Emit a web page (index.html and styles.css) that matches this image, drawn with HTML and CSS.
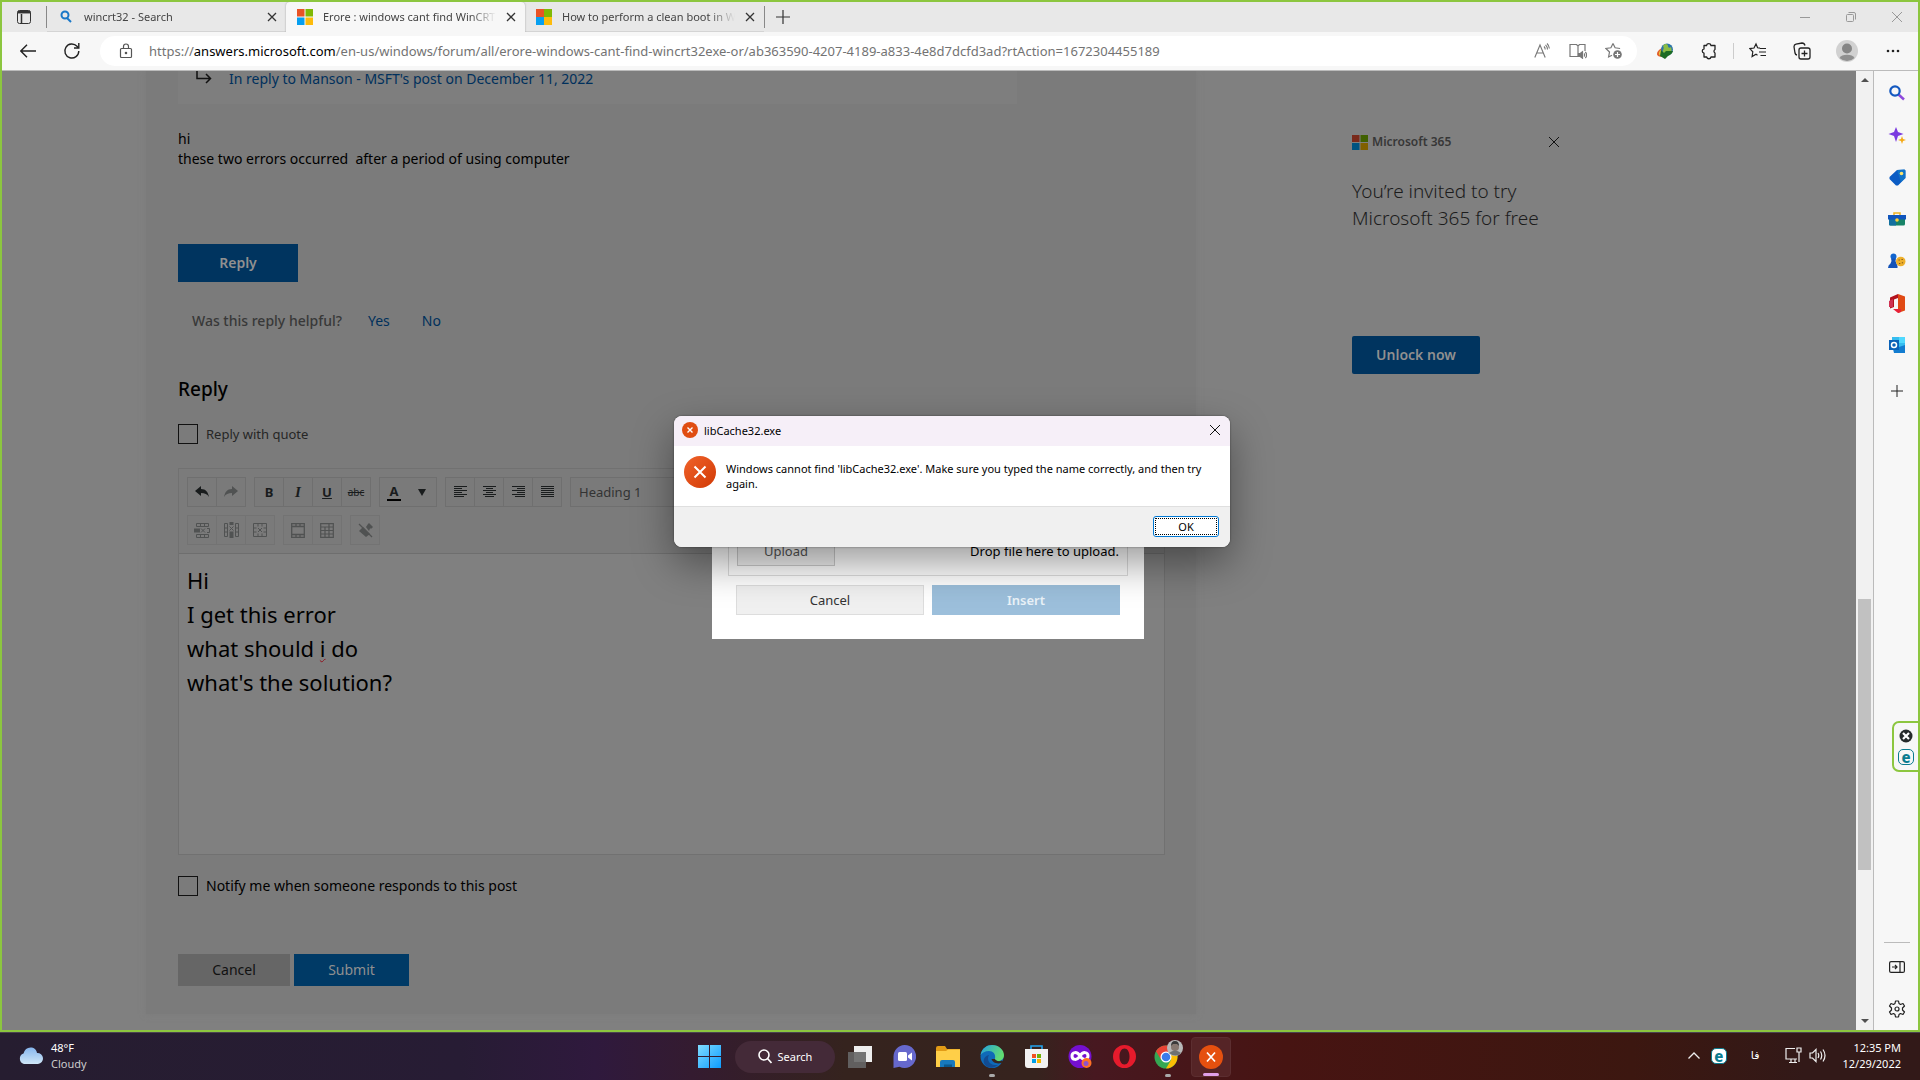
FILE: index.html
```html
<!DOCTYPE html>
<html lang="en">
<head>
<meta charset="utf-8">
<title>Erore : windows cant find WinCRT32.exe</title>
<link rel="stylesheet" href="styles.css">
</head>
<body>
<div class="browser">
  <div class="tabstrip">
    <button class="icon-btn tab-menu" aria-label="Tab actions"><svg width="16" height="16" viewBox="0 0 16 16" fill="none" stroke="#333"><rect x="1.5" y="1.5" width="13" height="13" rx="2"/><path d="M1.5 3.5h13M5.5 5v9" stroke-width="1.5"/><path d="M2 3h12" stroke-width="2.5"/></svg></button>
    <div class="tab"><svg width="16" height="16" viewBox="0 0 16 16" fill="none" stroke="#1a78c8" stroke-width="2"><circle cx="7" cy="6" r="3.5"/><path d="M9 9l4 4"/></svg><span class="tab-title">wincrt32 - Search</span><button class="icon-btn" aria-label="Close tab"><svg width="10" height="10" viewBox="0 0 10 10" stroke="#333" stroke-width="1.3"><path d="M1 1l8 8M9 1l-8 8"/></svg></button></div>
    <div class="tab active"><svg width="16" height="16" viewBox="0 0 16 16"><path fill="#e95325" d="M0 0h7.5v7.5H0z"/><path fill="#80b905" d="M8.500 0H16v7.500H8.500z"/><path fill="#069ff0" d="M0 8.500h7.500V16H0z"/><path fill="#fdbb0b" d="M8.500 8.500H16V16H8.500z"/></svg><span class="tab-title">Erore : windows cant find WinCRT32.exe</span><button class="icon-btn" aria-label="Close tab"><svg width="10" height="10" viewBox="0 0 10 10" stroke="#333" stroke-width="1.3"><path d="M1 1l8 8M9 1l-8 8"/></svg></button></div>
    <div class="tab"><svg width="16" height="16" viewBox="0 0 16 16"><path fill="#e95325" d="M0 0h8v8H0z"/><path fill="#80b905" d="M8 0h8v8H8z"/><path fill="#069ff0" d="M0 8h8v8H0z"/><path fill="#fdbb0b" d="M8 8h8v8H8z"/></svg><span class="tab-title">How to perform a clean boot in Windows</span><button class="icon-btn" aria-label="Close tab"><svg width="10" height="10" viewBox="0 0 10 10" stroke="#333" stroke-width="1.3"><path d="M1 1l8 8M9 1l-8 8"/></svg></button></div>
    <button class="icon-btn new-tab" aria-label="New tab"><svg width="14" height="14" viewBox="0 0 14 14" stroke="#333" stroke-width="1.200"><path d="M7 0v14M0 7h14"/></svg></button>
    <div class="win-controls">
      <button class="icon-btn" aria-label="Minimize"><svg width="10" height="10" viewBox="0 0 10 10" stroke="#999"><path d="M0 5.500h10"/></svg></button>
      <button class="icon-btn" aria-label="Restore"><svg width="10" height="10" viewBox="0 0 10 10" fill="none" stroke="#999"><rect x=".5" y="2.500" width="7" height="7" rx="1"/><path d="M2.500 .5H8a1.500 1.500 0 0 1 1.500 1.500v5.500"/></svg></button>
      <button class="icon-btn" aria-label="Close"><svg width="10" height="10" viewBox="0 0 10 10" stroke="#999"><path d="M0 0l10 10M10 0L0 10"/></svg></button>
    </div>
  </div>

  <div class="toolbar">
    <button class="icon-btn nav" aria-label="Back"><svg width="16" height="14" viewBox="0 0 16 14" fill="none" stroke="#222" stroke-width="1.400"><path d="M16 7H1M7 .7L.8 7l6.200 6.300"/></svg></button>
    <button class="icon-btn nav" aria-label="Refresh"><svg width="18" height="18" viewBox="0 0 18 18" fill="none" stroke="#222" stroke-width="1.400"><path d="M15.800 9A7 7 0 1 1 14 4.300l1.200 1.400"/><path d="M15.800 1v5H11"/></svg></button>
    <div class="address">
      <svg width="14" height="16" viewBox="0 0 14 16" fill="none" stroke="#555" stroke-width="1.200"><rect x="1.500" y="5.500" width="11" height="9" rx="1"/><path d="M4.500 5.500V3.500a2.500 2.500 0 0 1 5 0v2"/><circle cx="7" cy="10" r=".7" fill="#555"/></svg>
      <p class="url">https://<b>answers.microsoft.com</b>/en-us/windows/forum/all/erore-windows-cant-find-wincrt32exe-or/ab363590-4207-4189-a833-4e8d7dcfd3ad?rtAction=1672304455189</p>
      <button class="icon-btn slot" aria-label="Read aloud"><svg width="16" height="16" viewBox="0 0 16 16" fill="none" stroke="#777" stroke-width="1.100"><path d="M.8 14.500L6 2l5.200 12.500M2.500 10h7"/><path d="M10 3.500a4 4 0 0 1 1.200 3M11.500 1.800a6 6 0 0 1 2 4.700M13 .5a8 8 0 0 1 2.400 5"/></svg></button>
      <button class="icon-btn slot" aria-label="Immersive reader"><svg width="18" height="16" viewBox="0 0 18 16" fill="none" stroke="#777" stroke-width="1.200"><path d="M9 13.500H1V1.500h6.500L9 3l1.500-1.500H16V8M9 3v10.500"/><path d="M9.500 10.500h1.700l2.300-1.800v6.500l-2.300-1.700H9.500z" fill="#777"/><path d="M15 10.500a2 2 0 0 1 0 3M16.300 9a4 4 0 0 1 0 6"/></svg></button>
      <button class="icon-btn slot" aria-label="Add to favorites"><svg width="18" height="18" viewBox="0 0 18 18" fill="none" stroke="#777" stroke-width="1.200"><path d="M8 1.500l2.100 4.300 5 .7M8 1.500L5.900 5.800l-5 .7 3.600 3.500-.9 5L7 13.200"/><circle cx="12.500" cy="12.500" r="4.300" fill="#777" stroke="none"/><path d="M12.500 10v5M10 12.500h5" stroke="#fff"/></svg></button>
    </div>
    <button class="icon-btn ext" aria-label="Download manager"><svg width="18" height="16" viewBox="0 0 18 16"><ellipse cx="7" cy="9" rx="6.500" ry="4" transform="rotate(-30 7 9)" fill="#e2602c"/><ellipse cx="8" cy="9" rx="5.500" ry="3.500" transform="rotate(-30 8 9)" fill="#e8c63d"/><circle cx="11" cy="6.500" r="6" fill="#2c75a8"/><path d="M7 3c2-3 5-2 5 0s2 2 3 1c1 3 1 6-2 7s-5 0-6-2 2-3 0-6z" fill="#8cbd45"/><path d="M5 7l3 3 2-2h7c-1 3-3 4-5 5l-3 3-5-3z" fill="#1d6c25"/></svg></button>
    <button class="icon-btn ext" aria-label="Extensions"><svg width="18" height="18" viewBox="0 0 18 18" fill="none" stroke="#222" stroke-width="1.300"><path d="M4 3.500h2.500a2.300 2.300 0 0 1 4.500 0h4v4a2 2 0 0 0 0 3.500v4h-4a2.200 2.200 0 0 1-4.300 0H4v-3.800a2.200 2.200 0 0 1 0-4.300z" stroke-linejoin="round"/></svg></button>
    <span class="divider"></span>
    <button class="icon-btn ext" aria-label="Favorites"><svg width="18" height="18" viewBox="0 0 18 18" fill="none" stroke="#222" stroke-width="1.200"><path d="M11 6.200l-2.400-.4L7 2 5 6l-4.200.6 3 3.200-.7 4.700L7 12.300l1.500 1M11 6.500h6M10 10h7M11.500 13.500H17"/></svg></button>
    <button class="icon-btn ext" aria-label="Collections"><svg width="18" height="18" viewBox="0 0 18 18" fill="none" stroke="#222" stroke-width="1.300"><rect x="6" y="6" width="11" height="11" rx="2"/><path d="M11.500 8.500v6M8.500 11.500h6M4 13c-1.500-.3-1.800-1-2-2L1 4.800C1 3 1.500 2.500 3 2.200l6-1.200c2 0 2.500.5 3 2.500"/></svg></button>
    <button class="icon-btn avatar" aria-label="Profile"><svg width="22" height="22" viewBox="0 0 22 22"><circle cx="11" cy="11" r="11" fill="#d1d1d1"/><circle cx="11" cy="8.500" r="5" fill="#858585"/><path d="M3.500 18a8 5 0 0 1 15 0 11 11 0 0 1-15 0z" fill="#8f8f8f"/></svg></button>
    <button class="icon-btn avatar" aria-label="Settings and more"><svg width="14" height="4" viewBox="0 0 14 4" fill="#222"><circle cx="2" cy="2" r="1.300"/><circle cx="7" cy="2" r="1.300"/><circle cx="12" cy="2" r="1.300"/></svg></button>
  </div>

  <div class="viewport">
    <main class="page">
      <section class="card">
        <div class="in-reply"><svg width="16" height="14" viewBox="0 0 16 14" fill="none" stroke="#111" stroke-width="1.500"><path d="M1 0v7.500h13M10 3l4.500 4.500L10 12"/></svg><a href="#post">In reply to Manson - MSFT's post on December 11, 2022</a></div>
        <p class="message">hi<br>these two errors occurred&nbsp; after a period of using computer</p>
        <button class="btn primary reply-btn">Reply</button>
        <div class="helpful"><span>Was this reply helpful?</span><a href="#yes">Yes</a><a href="#no">No</a></div>
        <h2 class="heading">Reply</h2>
        <label class="check quote"><input type="checkbox">Reply with quote</label>
        <div class="editor">
          <div class="tools">
            <div class="tool-row">
              <div class="group">
                <button aria-label="Undo"><svg width="14" height="12" viewBox="0 0 14 12" fill="#191c1d"><path d="M0 5l6-5v3c5 0 7 3 8 8-2-3-4-4-8-4v3z"/></svg></button>
                <button class="off" aria-label="Redo"><svg width="14" height="12" viewBox="0 0 14 12" fill="#505252"><path d="M14 5L8 0v3C3 3 1 6 0 11c2-3 4-4 8-4v3z"/></svg></button>
              </div>
              <div class="group"><button><b>B</b></button><button class="serif"><i>I</i></button><button><u>U</u></button><button class="abc"><s>abc</s></button></div>
              <div class="group"><button class="color">A</button><button aria-label="Color menu"><svg width="8" height="7" viewBox="0 0 8 7" fill="#191c1d"><path d="M0 0h8L4 7z"/></svg></button></div>
              <div class="group">
                <button aria-label="Align left"><svg width="13" height="12" viewBox="0 0 13 12" stroke="#191c1d"><path d="M0 .5h13M0 2.500h8M0 4.500h13M0 6.500h8M0 8.500h13M0 10.500h10"/></svg></button>
                <button aria-label="Align center"><svg width="13" height="12" viewBox="0 0 13 12" stroke="#191c1d"><path d="M0 .5h13M3 2.500h7M0 4.500h13M3 6.500h7M0 8.500h13M2 10.500h9"/></svg></button>
                <button aria-label="Align right"><svg width="13" height="12" viewBox="0 0 13 12" stroke="#191c1d"><path d="M0 .5h13M5 2.500h8M0 4.500h13M5 6.500h8M0 8.500h13M3 10.500h10"/></svg></button>
                <button aria-label="Justify"><svg width="13" height="12" viewBox="0 0 13 12" stroke="#191c1d"><path d="M0 .5h13M0 2.500h13M0 4.500h13M0 6.500h13M0 8.500h13M0 10.500h13"/></svg></button>
              </div>
              <select class="format" aria-label="Format"><option>Heading 1</option></select>
            </div>
            <div class="tool-row faded">
              <div class="group">
                <button aria-label="Delete row"><svg width="16" height="15" viewBox="0 0 16 15" fill="none" stroke="#505252"><path d="M2.500 .5h12v3h-12zM6.500.5v3M10.500.5v3M2.500 11.500h12v3h-12zM6.500 11.500v3M10.500 11.500v3M7 5.500l4 4M11 5.500l-4 4M13 5.500h2.500v4H13"/><path d="M0 5.500h6v4H0z" fill="#505252" stroke="none"/></svg></button>
                <button aria-label="Delete column"><svg width="15" height="16" viewBox="0 0 15 16" fill="none" stroke="#505252"><path d="M.5 1.500h3v13h-3zM.5 6h3M.5 10h3M11.500 1.500h3v13h-3zM11.500 6h3M11.500 10h3M5.500 4.500l4 4M9.500 4.500l-4 4"/><path d="M5.500 9.500h4V16h-4zM5.500 0h4v3h-4z" fill="#505252" stroke="none"/></svg></button>
                <button aria-label="Delete table"><svg width="14" height="14" viewBox="0 0 14 14" fill="none" stroke="#505252"><path d="M.5.500h13v13H.5zM5 .5v3M9 .5v3M5 10.500v3M9 10.500v3M.5 5h3M.5 9h3M10.500 5h3M10.500 9h3M5 5l4 4M9 5L5 9"/></svg></button>
              </div>
              <div class="group">
                <button aria-label="Merge"><svg width="14" height="15" viewBox="0 0 14 15" fill="none" stroke="#505252" stroke-width="1.300"><path d="M.7.700h12.600v13.600H.7zM.7 3.500h12.600M.7 11.500h12.600M5 .7v3M9 .7v3M5 11.500v3M9 11.500v3"/></svg></button>
                <button aria-label="Table"><svg width="14" height="15" viewBox="0 0 14 15" fill="none" stroke="#505252" stroke-width="1.200"><path d="M.7.700h12.600v13.600H.7zM.7 4h12.600M.7 7.500h12.600M.7 11h12.600M5 4v10M9 .7V14"/></svg></button>
              </div>
              <div class="group"><button aria-label="Clear formatting"><svg width="15" height="15" viewBox="0 0 15 15" fill="#505252"><path d="M10 1l1-1 4 4-1.500 1.500-1.500 0-1 2.500-3-4zM5 4l7 7-4 3-7-6z"/><path d="M1 1l13 13" stroke="#505252" stroke-width="1.300"/></svg></button></div>
            </div>
          </div>
          <div class="text" role="textbox" aria-label="Reply text" contenteditable="true" spellcheck="false"><p>Hi</p><p>I get this error</p><p>what should <span class="misspelt">i</span> do</p><p>what's the solution?</p></div>
        </div>
        <label class="check notify"><input type="checkbox">Notify me when someone responds to this post</label>
        <div class="actions"><button class="btn cancel">Cancel</button><button class="btn submit">Submit</button></div>
      </section>
      <aside class="promo">
        <div class="promo-head"><svg width="16" height="17" viewBox="0 0 16 17"><path fill="#79291a" d="M0 1h7.500v7H0z"/><path fill="#406000" d="M8.500 1H16v7H8.500z"/><path fill="#005380" d="M0 9h7.500v7H0z"/><path fill="#806000" d="M8.500 9H16v7H8.500z"/></svg><span>Microsoft 365</span><button class="icon-btn" aria-label="Dismiss"><svg width="10" height="10" viewBox="0 0 10 10" stroke="#111"><path d="M0 0l10 10M10 0L0 10"/></svg></button></div>
        <h3>You’re invited to try Microsoft 365 for free</h3>
        <button class="btn primary unlock">Unlock now</button>
      </aside>

      <div class="upload-modal" role="dialog" aria-label="Insert image">
        <div class="drop"><button>Upload</button><span>Drop file here to upload.</span></div>
        <div class="modal-actions"><button>Cancel</button><button class="insert">Insert</button></div>
      </div>
    </main>
    <div class="scrollbar"><svg width="8" height="4" viewBox="0 0 8 4" fill="#505050"><path d="M4 0l4 4H0z"/></svg><div class="track"><div class="thumb"></div></div><svg width="8" height="4" viewBox="0 0 8 4" fill="#505050"><path d="M0 0h8L4 4z"/></svg></div>
    <nav class="sidebar" aria-label="Sidebar">
      <button class="icon-btn" aria-label="Search"><svg width="16" height="16" viewBox="0 0 16 16" fill="none"><path d="M9.500 9.500l5.500 5" stroke="#8e49dc" stroke-width="2.500"/><circle cx="6" cy="6" r="4.700" stroke="#1459c0" stroke-width="2.200"/></svg></button>
      <button class="icon-btn" aria-label="Discover"><svg width="18" height="18" viewBox="0 0 18 18"><path d="M8 1l2 5 5.500 2L10 10l-2 6-2-6L.5 8 6 6z" fill="#7b3be0"/><path d="M14 10l1 3 3 1-3 1-1 3-1-3-3-1 3-1z" fill="#f5a914"/></svg></button>
      <button class="icon-btn" aria-label="Shopping"><svg width="17" height="17" viewBox="0 0 17 17"><path d="M8 1l7.500-.5Q17 1 16.500 3v6L9 16.500H7L.5 10V8z" fill="#0b5cc4"/><path d="M8 1l7.500-.5Q17 1 16.500 3v6L12 13z" fill="#1583cc" opacity=".6"/><circle cx="12.500" cy="4.500" r="1.800" fill="#fce36b"/></svg></button>
      <button class="icon-btn" aria-label="Tools"><svg width="18" height="14" viewBox="0 0 18 14"><path d="M6 4V1h6v3" fill="none" stroke="#eeb224" stroke-width="1.500"/><path d="M1 7h16v5q0 1.500-1.500 1.500h-13Q1 13.500 1 12z" fill="#178367"/><path d="M1 7h7v6.500H2.500Q1 13.500 1 12z" fill="#1370a0"/><path d="M0 3h18v4.500H0z" fill="#1055bd"/><circle cx="9" cy="8" r="1.800" fill="#ffd13b"/></svg></button>
      <button class="icon-btn" aria-label="Games"><svg width="18" height="16" viewBox="0 0 18 16"><circle cx="5.500" cy="3.500" r="3" fill="#1265ce"/><path d="M3 5.500h5L7.500 8l2 5v2H0q0-3 2.500-4.500L3.500 8z" fill="#1453b8"/><circle cx="12.700" cy="8.500" r="4.800" fill="#eeb02c"/><path d="M10.500 7h1.300M13.500 6.500h1.300M11 10.500h1.300M13.800 9.800h1.300" stroke="#7d5418"/></svg></button>
      <button class="icon-btn" aria-label="Office"><svg width="16" height="19" viewBox="0 0 16 19"><path d="M9 0l7 2.500v14L9 19z" fill="#e04a15"/><path d="M9 0L1 3.500v11L5 13V5.500l4-1.500z" fill="#b3131e"/><path d="M4 15l5 4 3-1v-3z" fill="#e82137"/><path d="M0 13V7l4-2v8z" fill="#cf3252"/></svg></button>
      <button class="icon-btn" aria-label="Outlook"><svg width="16" height="16" viewBox="0 0 16 16"><path d="M3 0h13v13H3z" fill="#36bdf0"/><path d="M10 0h6v6h-6z" fill="#50d9ff"/><path d="M4 12l12-4v8H5z" fill="#127cd0"/><path d="M0 3h10v10H0z" fill="#0a62b8"/><circle cx="5" cy="8" r="2.500" fill="none" stroke="#fff" stroke-width="1.500"/></svg></button>
      <button class="icon-btn add" aria-label="Add"><svg width="12" height="12" viewBox="0 0 12 12" stroke="#222"><path d="M6 0v12M0 6h12"/></svg></button>
      <span class="rule"></span>
      <button class="icon-btn" aria-label="Hide sidebar"><svg width="16" height="12" viewBox="0 0 16 12" fill="none" stroke="#222" stroke-width="1.200"><rect x=".6" y=".6" width="14.800" height="10.800" rx="1.500"/><path d="M11 .6v11M3 6h5M6 4l2 2-2 2"/></svg></button>
      <button class="icon-btn" aria-label="Settings"><svg width="18" height="18" viewBox="0 0 18 18" fill="none" stroke="#222" stroke-width="1.200" stroke-linejoin="round"><path d="M7.500 1h3l.5 2.500 1.500 1 2.500-1L16.500 6l-2 2v2l2 2-1.500 2.500-2.500-1-1.500 1-.5 2.500h-3L7 14.500l-1.500-1-2.500 1L1.500 12l2-2V8l-2-2L3 3.500l2.500 1 1.500-1z"/><circle cx="9" cy="9" r="2"/></svg></button>
    </nav>
  </div>
</div>

<div class="float-tab">
  <svg width="14" height="14" viewBox="0 0 14 14"><circle cx="7" cy="7" r="6.500" fill="#262a2b"/><path d="M4 4l6 6M10 4l-6 6" stroke="#fff" stroke-width="2.200"/></svg>
  <span class="e-badge">e</span>
</div>

<div class="error-dialog" role="alertdialog" aria-labelledby="err-title">
  <header><svg width="16" height="16" viewBox="0 0 16 16"><circle cx="8" cy="8" r="8" fill="#e04d12"/><path d="M5.500 5.500l5 5M10.500 5.500l-5 5" stroke="#fff" stroke-width="1.400"/></svg><span id="err-title">libCache32.exe</span><button class="icon-btn" aria-label="Close"><svg width="10" height="10" viewBox="0 0 10 10" stroke="#111"><path d="M0 0l10 10M10 0L0 10"/></svg></button></header>
  <div class="error-body"><svg width="32" height="32" viewBox="0 0 32 32"><defs><linearGradient id="err" x1="0" y1="0" x2="1" y2="1"><stop offset="0" stop-color="#f0622a"/><stop offset="1" stop-color="#d13a05"/></linearGradient></defs><circle cx="16" cy="16" r="16" fill="url(#err)"/><path d="M10.500 10.500l11 11M21.500 10.500l-11 11" stroke="#fff" stroke-width="2"/></svg><p>Windows cannot find 'libCache32.exe'. Make sure you typed the name correctly, and then try again.</p></div>
  <footer><button class="ok">OK</button></footer>
</div>

<div class="taskbar">
  <div class="weather"><svg width="26" height="18" viewBox="0 0 26 18"><defs><linearGradient id="cl" x1="0" y1="0" x2="0" y2="1"><stop offset="0" stop-color="#86b6ee"/><stop offset="1" stop-color="#cfe6f7"/></linearGradient></defs><path d="M6 17a5.500 5.500 0 0 1-.5-10.500C6.500 2.500 9 .5 12.500.5s6 2 6.500 5.500a5.500 5.500 0 0 1 1 11z" fill="url(#cl)"/></svg><p>48°F<br><span>Cloudy</span></p></div>
  <div class="apps">
    <button class="icon-btn app start" aria-label="Start"><svg width="23" height="23" viewBox="0 0 23 23"><defs><linearGradient id="st" x1="0" y1="0" x2="23" y2="23" gradientUnits="userSpaceOnUse"><stop offset="0" stop-color="#7fdcff"/><stop offset="1" stop-color="#0d9cff"/></linearGradient></defs><path fill="url(#st)" d="M0 0h11v11H0zM12 0h11v11H12zM0 12h11v11H0zM12 12h11v11H12z"/></svg></button>
    <button class="search"><svg width="14" height="15" viewBox="0 0 14 15" fill="none" stroke="#fff" stroke-width="1.600"><circle cx="6" cy="6" r="5"/><path d="M9.500 9.500l4 4.500"/></svg>Search</button>
    <button class="icon-btn app" aria-label="Task view"><svg width="24" height="22" viewBox="0 0 24 22"><path d="M6 0h18v16H6z" fill="#eee"/><path d="M0 6h18v16H0z" fill="#666" opacity=".9"/></svg></button>
    <button class="icon-btn app" aria-label="Chat"><svg width="23" height="23" viewBox="0 0 23 23"><path d="M11.500 0a11.500 11.500 0 1 1-5 21.800L.5 23V11.500A11.500 11.500 0 0 1 11.500 0z" fill="#6668cc"/><rect x="5" y="7" width="9" height="9" rx="1.500" fill="#fff"/><path d="M15 10.500l4-3v8l-4-3z" fill="#fff"/></svg></button>
    <button class="icon-btn app" aria-label="File Explorer"><svg width="24" height="21" viewBox="0 0 24 21"><path d="M0 2Q0 0 2 0h7l2 3h13v6H0z" fill="#e29b16"/><path d="M0 5h10l2-1.500h12V21H0z" fill="#ffcf48"/><path d="M4 21v-5q0-2 2-2h11q2 0 2 2v5z" fill="#1779bd"/><path d="M8 21v-2.500h8V21z" fill="#0a588d"/></svg></button>
    <button class="icon-btn app running" aria-label="Edge"><svg width="24" height="23" viewBox="0 0 24 23"><defs><linearGradient id="ed" x1="0" y1="0" x2="1" y2=".4"><stop offset="0" stop-color="#249fe0"/><stop offset="1" stop-color="#61dc72"/></linearGradient></defs><circle cx="12" cy="11.500" r="11.500" fill="#0f6ab8"/><path d="M.5 10C2 3 7 0 12 0c7 0 12 5 12 10 0 4-3 6-6 6-2 0-4-1-3-2.500C16 9 13 6 9 6S2 8 .5 10z" fill="url(#ed)"/><path d="M9 10c-3 5 1 11 9 10-4 3-9 4-13 0-3-4-1-9 4-10z" fill="#124b91"/><path d="M15 14c1 2 4 3 7 1.500l1.500 1.500c-5 3-11 1-12-3z" fill="#36251e"/></svg></button>
    <button class="icon-btn app" aria-label="Store"><svg width="23" height="24" viewBox="0 0 23 24"><path d="M6 5V1h11v4" fill="none" stroke="#22a4ee" stroke-width="1.600"/><path d="M0 4h23v16q0 3-3 3H3q-3 0-3-3z" fill="#f2f2f2"/><path d="M7 9h4v4H7z" fill="#f25022"/><path d="M12 9h4v4h-4z" fill="#6fb108"/><path d="M7 14h4v4H7z" fill="#00a0e8"/><path d="M12 14h4v4h-4z" fill="#f8b400"/></svg></button>
    <button class="icon-btn app" aria-label="Private browser"><svg width="24" height="24" viewBox="0 0 24 24"><circle cx="12" cy="11.500" r="11.500" fill="#7510d0"/><path d="M12 11C9 6 4 7 4 11s5 5 8 0c3-5 8-4 8 0s-5 5-8 0z" fill="none" stroke="#fff" stroke-width="3"/><circle cx="18.500" cy="18" r="5" fill="#ff7025"/><circle cx="18" cy="18.500" r="2.500" fill="#9052ca"/></svg></button>
    <button class="icon-btn app" aria-label="Opera"><svg width="23" height="23" viewBox="0 0 23 23"><path fill-rule="evenodd" d="M11.500 0a11.500 11.500 0 1 1 0 23 11.500 11.500 0 1 1 0-23zm0 3.500C8.500 3.500 6.500 7 6.500 11.500s2 8 5 8 5-3.500 5-8-2-8-5-8z" fill="#e51b2c"/></svg></button>
    <button class="icon-btn app running" aria-label="Chrome"><svg width="30" height="34" viewBox="0 0 30 34"><circle cx="13" cy="17" r="11.500" fill="#35a853"/><path d="M3 11.300A11.500 11.500 0 0 1 23 11.300L13 12.500l-5 7z" fill="#ea4335"/><path d="M23 11.300A11.500 11.500 0 0 1 13 28.500l5-8.500-.5-7.500z" fill="#fbbd05"/><circle cx="13" cy="17" r="5.500" fill="#fff"/><circle cx="13" cy="17" r="4.300" fill="#3b7bea"/><circle cx="22" cy="8" r="8" fill="#b8b8b8"/><circle cx="22" cy="7" r="4" fill="#86776f"/><path d="M18 6q0-5 4-5t4 5l-2-2h-4z" fill="#3a3a3a"/><path d="M16 13q6-5 12 0-5 5-12 0z" fill="#6e7173"/></svg></button>
    <button class="icon-btn app current" aria-label="libCache32.exe"><svg width="24" height="24" viewBox="0 0 24 24"><circle cx="12" cy="12" r="12" fill="#e5500f"/><path d="M8 7.500l8 9M16 7.500l-8 9" stroke="#fff" stroke-width="1.700"/></svg></button>
  </div>
  <div class="tray">
    <svg width="12" height="7" viewBox="0 0 12 7" fill="none" stroke="#eee" stroke-width="1.300"><path d="M.5 6.500L6 1l5.500 5.500"/></svg>
    <span class="e-badge light">e</span>
    <span class="lang" lang="fa">فا</span>
    <div class="status"><svg width="17" height="17" viewBox="0 0 17 17" fill="none" stroke="#eee" stroke-width="1.200"><path d="M10 1.500H1v10.500h11M4 15.500h8M6 12v3M10 12v3M12 1h4v4h-4zM14 5v10"/></svg><svg width="17" height="15" viewBox="0 0 17 15" fill="none" stroke="#eee" stroke-width="1.200"><path d="M1 5h2.500L7 1.500v12L3.500 10H1zM9 5q1.500 2.500 0 5M11.500 3.500q2.500 4 0 8M14 1.500q4 6 0 12"/></svg></div>
    <time>12:35 PM<br>12/29/2022</time>
  </div>
</div>
</body>
</html>
```
FILE: styles.css
```css
* { box-sizing: border-box; }
body {
  margin: 0;
  height: 100vh;
  display: flex;
  flex-direction: column;
  position: relative;
  overflow: hidden;
  font-family: "Noto Sans", "Open Sans", sans-serif;
  font-size: 14px;
  line-height: 20px;
  color: #000;
}
p, h2, h3 { margin: 0; }
button, input, select { font: inherit; color: inherit; }
button { padding: 0; border: 0; background: none; }
a { color: #00305c; text-decoration: none; }
svg { display: block; flex: none; }
.icon-btn { display: grid; place-items: center; flex: none; }

.browser {
  flex: 1;
  min-height: 0;
  display: flex;
  flex-direction: column;
  border: 2px solid #8cc63f;
  background: #f7f7f7;
}

/* Tabs */
.tabstrip { display: flex; height: 30px; background: #e8e8e8; font-size: 11px; }
.tab-menu { width: 45px; border-right: 1px solid #888; margin: 4px 0; }
.tab {
  display: flex;
  align-items: center;
  gap: 10px;
  flex: 0 1 239px;
  min-width: 0;
  padding: 0 9px 0 11px;
  border-bottom: 1px solid #d4d4d4;
  color: #444;
}
.tab.active { background: #f7f7f7; border-color: #f7f7f7; border-radius: 4px 4px 0 0; box-shadow: 0 0 2px #999; clip-path: inset(0 -2px); }
.tab-title {
  flex: 1;
  overflow: hidden;
  white-space: nowrap;
  mask-image: linear-gradient(to right, #000 85%, transparent);
}
.new-tab { width: 36px; margin: 4px 0; border-left: 1px solid #888; }
.win-controls { display: flex; margin-left: auto; }
.win-controls .icon-btn { width: 46px; padding-left: 4px; }

/* Address bar */
.toolbar {
  display: flex;
  align-items: center;
  height: 39px;
  padding: 0 2px 0 4px;
  border-bottom: 1px solid #bbb;
}
.nav { width: 44px; height: 30px; }
.address {
  flex: 1;
  min-width: 0;
  display: flex;
  align-items: center;
  height: 30px;
  margin: 0 6px;
  padding: 0 5px 0 19px;
  border-radius: 15px;
  background: #fff;
}
.url { flex: 1; margin-left: 16px; overflow: hidden; white-space: nowrap; font-size: 13px; color: #737373; }
.url b { font-weight: 400; color: #000; }
.slot { width: 36px; }
.ext { width: 44px; }
.divider { width: 1px; height: 16px; margin: 0 2px; background: #ccc; }
.avatar { width: 46px; }

.viewport { flex: 1; min-height: 0; display: flex; }

/* Forum page */
.page {
  flex: 1;
  position: relative;
  overflow: hidden;
  display: grid;
  grid-template-columns: minmax(0, 1fr) 216px;
  gap: 156px;
  align-items: start;
  padding: 0 288px 0 144px;
  background: #808080;
}
.card { padding: 0 31px 28px 32px; background: #7b7b7b; box-shadow: 0 0 6px #7b7b7b; }
.in-reply {
  display: flex;
  gap: 17px;
  width: 85%;
  padding: 0 0 17px 18px;
  background: #7e7e7e;
  line-height: 16px;
}
.message { margin-top: 25px; }
.btn { display: block; color: #909090; }
.primary { height: 38px; background: #00345f; font-weight: 600; }
.reply-btn { width: 120px; margin-top: 75px; }
.helpful { display: flex; gap: 32px; margin: 29px 0 0 14px; }
.helpful span { color: #383838; font-weight: 500; margin-right: -6px; }
.heading { margin-top: 44px; font-size: 19px; line-height: 28px; font-weight: 500; }
.check { display: flex; align-items: center; gap: 8px; height: 20px; }
.check input { appearance: none; width: 20px; height: 20px; margin: 0; border: 1px solid #111; }
.quote { margin-top: 21px; font-size: 13px; color: #262626; }
.notify { margin-top: 21px; }
.actions { display: flex; gap: 4px; margin-top: 58px; }
.cancel { width: 112px; height: 32px; background: #666; color: #111; }
.submit { width: 115px; height: 32px; background: #003a66; }

.editor { height: 387px; margin-top: 24px; border: 1px solid #717171; display: flex; flex-direction: column; }
.tools { display: flex; flex-direction: column; gap: 8px; padding: 8px; border-bottom: 1px solid #6e6e6e; }
.tool-row { display: flex; gap: 8px; height: 30px; }
.group { display: flex; border: 1px solid #6f6f6f; background: #7a7a7a; }
.group button { width: 28px; display: grid; place-items: center; font-size: 13px; color: #191c1d; }
.group button + button { border-left: 1px solid #6f6f6f; width: 29px; }
.group b, .group u { font-weight: 700; }
.group .serif { font-family: "Liberation Serif", serif; font-weight: 700; font-size: 15px; }
.group .abc { font-size: 10px; }
.group .color { font-weight: 700; line-height: 16px; align-content: center; }
.color::after { content: ""; width: 14px; height: 2px; background: #000; }
.group .color + button { border-left: 0; width: 28px; }
.faded .group { border-color: #737373; }
.faded .group button { border-color: #737373; }
.format { appearance: none; width: 160px; padding: 0 8px; border: 1px solid #6f6f6f; border-radius: 0; background: #7a7a7a; color: #333; font-size: 13px; }
.text { flex: 1; padding: 9px 8px; background: #808080; font-size: 22px; line-height: 34px; }
.misspelt { text-decoration: underline wavy #8f1420 1px; }

/* Promo */
.promo { padding-top: 61px; }
.promo-head { display: flex; align-items: center; gap: 4px; padding-right: 2px; font-size: 12px; font-weight: 600; color: #373737; }
.promo-head .icon-btn { margin-left: auto; width: 24px; height: 20px; }
.promo h3 { margin: 26px 0 0; font-size: 19px; line-height: 27px; font-weight: 300; color: #1c1c1c; }
.unlock { width: 128px; margin-top: 104px; border-radius: 2px; }

/* Upload modal */
.upload-modal {
  position: absolute;
  top: 400px;
  left: calc(50% - 217px);
  width: 432px;
  height: 168px;
  padding: 0 16px;
  background: #fff;
  font-size: 13px;
}
.drop {
  display: flex;
  justify-content: space-between;
  align-items: flex-end;
  height: 105px;
  padding: 9px 8px;
  border: 1px solid #ddd;
}
.drop button { width: 98px; height: 30px; border: 1px solid #ccc; background: #f3f3f3; color: #555; }
.drop span { line-height: 30px; }
.modal-actions { display: grid; grid-template-columns: 1fr 1fr; gap: 8px; margin: 9px 8px 0; }
.modal-actions button { height: 30px; border: 1px solid #ddd; background: #f0f0f0; color: #333; }
.modal-actions .insert { border-color: #9cbfdb; background: #9cbfdb; color: #eaf2f8; font-weight: 600; }

/* Scrollbar and Edge sidebar */
.scrollbar { width: 18px; display: flex; flex-direction: column; align-items: center; padding: 7px 0; background: #f1f1f1; border-right: 1px solid #bbb; }
.track { flex: 1; width: 13px; display: flex; flex-direction: column; }
.track::before { content: ""; flex: 517; }
.track::after { content: ""; flex: 149; }
.thumb { flex: 271; background: #c1c1c1; }
.sidebar { width: 44px; display: flex; flex-direction: column; padding: 1px 0 0 2px; }
.sidebar .icon-btn { height: 42px; }
.sidebar .add { height: 50px; }
.sidebar .rule { margin: auto 8px 3px; border-top: 1px solid #bbb; }

.e-badge {
  display: grid;
  place-items: center;
  width: 16px;
  height: 16px;
  border: 1px solid #0a7c90;
  border-radius: 5px;
  font-size: 15px;
  line-height: 12px;
  font-weight: 800;
  color: #0a7c90;
}
.e-badge.light { background: #fff; }
.float-tab {
  position: absolute;
  right: 0;
  top: 721px;
  width: 28px;
  height: 51px;
  display: flex;
  flex-direction: column;
  align-items: center;
  justify-content: center;
  gap: 6px;
  border: 2px solid #8cc63f;
  border-radius: 7px 0 0 7px;
  background: #f7f7f7;
}

/* Error dialog */
.error-dialog {
  position: absolute;
  top: 416px;
  left: calc(50% - 286px);
  width: 556px;
  border-radius: 8px;
  background: #fff;
  box-shadow: 0 16px 40px rgba(0, 0, 0, .4), 0 0 2px rgba(0, 0, 0, .5);
  font-size: 11px;
  line-height: 15px;
}
.error-dialog header { display: flex; align-items: center; gap: 6px; height: 30px; padding: 0 7px 2px 8px; border-radius: 8px 8px 0 0; background: #f6eff8; }
.error-dialog header .icon-btn { margin-left: auto; width: 16px; height: 16px; }
.error-body { display: flex; gap: 10px; height: 60px; padding: 10px; }
.error-body p { padding-top: 5px; }
.error-dialog footer { display: flex; justify-content: flex-end; padding: 9px 11px 10px; border-top: 1px solid #dfdfdf; border-radius: 0 0 8px 8px; background: #f0f0f0; }
.ok { width: 66px; height: 21px; border: 1px solid #0078d4; border-radius: 3px; background: #fff; outline: 1px dotted #000; outline-offset: -3px; }

/* Taskbar */
.taskbar {
  display: grid;
  grid-template-columns: 1fr auto 1fr;
  height: 48px;
  border-top: 1px solid #4a4350;
  background: linear-gradient(to right, #261d30 0, #271c34 24%, #2f193d 31%, #341b30 36%, #35231e 44%, #36231e 54%, #471820 57%, #471412 67%, #3c1710 85%, #321918 94%);
  color: #fff;
  font-size: 11px;
  line-height: 16px;
}
.weather { display: flex; align-items: center; gap: 7px; padding: 0 0 2px 18px; }
.weather span { color: #ccc; }
.apps { display: flex; align-items: center; padding-right: 4px; }
.app { position: relative; width: 44px; height: 40px; }
.apps .start { width: 48px; }
.search { display: flex; align-items: center; justify-content: center; gap: 6px; width: 100px; height: 32px; margin: 0 3px 0 2px; border-radius: 16px; background: #442a38; }
.running::after, .current::after { content: ""; position: absolute; bottom: 0; width: 6px; height: 3px; border-radius: 2px; background: #aaa; }
.apps .current { width: 40px; margin-left: 1px; border: 1px solid #5c2e30; border-radius: 4px; background: #552426; }
.current::after { width: 16px; background: #e0a0e8; }
.tray { display: flex; align-items: center; justify-content: flex-end; padding: 0 19px 2px 0; }
.tray .e-badge { margin: 0 24px 0 11px; }
.lang { font-family: "DejaVu Sans", sans-serif; margin-right: 26px; }
.status { display: flex; align-items: center; gap: 7px; margin-right: 16px; }
time { text-align: right; }
```
